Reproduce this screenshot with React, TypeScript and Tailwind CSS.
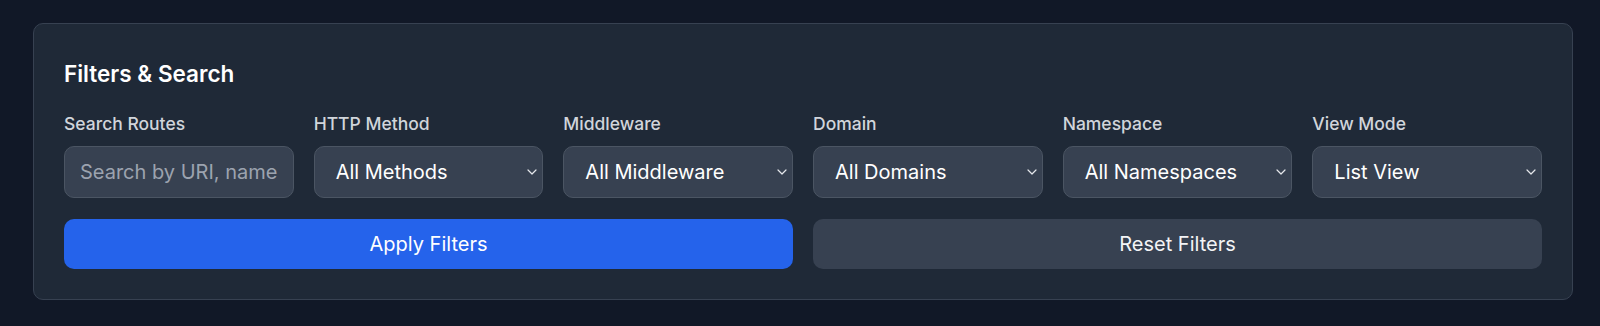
import { useState } from "react";

const selects = [
  { label: "HTTP Method", value: "All Methods" },
  { label: "Middleware", value: "All Middleware" },
  { label: "Domain", value: "All Domains" },
  { label: "Namespace", value: "All Namespaces" },
  { label: "View Mode", value: "List View" },
];

const Chevron = () => (
  <svg width="10" height="6" viewBox="0 0 10 6" fill="none" className="shrink-0">
    <path d="M1 1l4 4 4-4" stroke="#e5e7eb" strokeWidth="1.2" strokeLinecap="round" strokeLinejoin="round" />
  </svg>
);

const App = () => {
  const [search, setSearch] = useState<string>("");

  return (
    <div
      className="min-h-[326px] bg-[#111827] pt-[23px] pr-[27px] pb-[25px] pl-[33px]"
      style={{ fontFamily: "Inter, 'Noto Sans', sans-serif" }}
    >
      <div className="rounded-[10px] border border-[#374151] bg-[#1f2937] px-[30px] pt-[32px] pb-[30px]">
        <h2 className="text-[22.5px] leading-[35px] font-semibold text-white">Filters &amp; Search</h2>

        <div className="mt-[20px] grid grid-cols-6 gap-x-[20px]">
          <div className="flex flex-col">
            <label className="text-[17.5px] leading-[25px] font-medium text-[#d1d5db]">Search Routes</label>
            <input
              type="text"
              value={search}
              onChange={(e) => setSearch(e.target.value)}
              placeholder="Search by URI, name, or action..."
              className="mt-[10px] h-[52px] w-full rounded-[10px] border border-[#4b5563] bg-[#374151] px-[15px] text-[20px] text-white outline-none placeholder:text-[#9ca3af]"
            />
          </div>
          {selects.map((item) => (
            <div key={item.label} className="flex flex-col">
              <label className="text-[17.5px] leading-[25px] font-medium text-[#d1d5db]">{item.label}</label>
              <button
                type="button"
                className="mt-[10px] flex h-[52px] w-full items-center justify-between rounded-[10px] border border-[#4b5563] bg-[#374151] pr-[5px] pl-[21px] text-left text-[20px] text-white"
              >
                <span>{item.value}</span>
                <Chevron />
              </button>
            </div>
          ))}
        </div>

        <div className="mt-[21px] grid grid-cols-2 gap-x-[20px]">
          <button type="button" className="h-[50px] rounded-[10px] bg-[#2563eb] text-[20px] text-white">
            Apply Filters
          </button>
          <button type="button" className="h-[50px] rounded-[10px] bg-[#374151] text-[20px] text-[#f3f4f6]">
            Reset Filters
          </button>
        </div>
      </div>
    </div>
  );
};

export default App;
